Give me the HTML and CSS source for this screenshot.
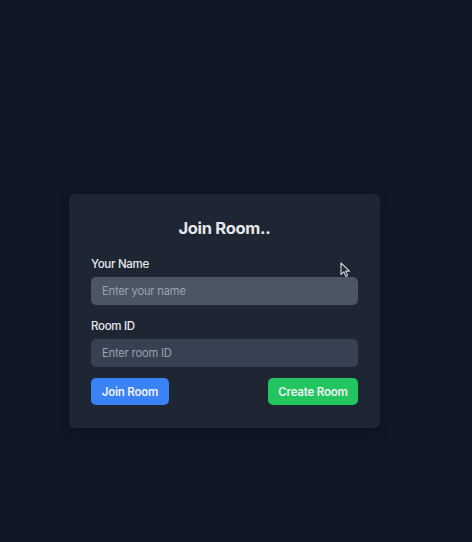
FILE: index.html
```html
<!DOCTYPE html>
<html>
<head>
<meta charset="utf-8">
<link rel="stylesheet" href="styles.css">
</head>
<body>
<div class="page">
  <div class="card">
    <h1 class="title">Join Room..</h1>
    <div class="field">
      <label class="label">Your Name</label>
      <input class="input input-hover" type="text" placeholder="Enter your name">
    </div>
    <div class="field">
      <label class="label">Room ID</label>
      <input class="input" type="text" placeholder="Enter room ID">
    </div>
    <div class="actions">
      <button class="btn btn-blue">Join Room</button>
      <button class="btn btn-green">Create Room</button>
    </div>
  </div>
</div>
<svg class="cursor" width="11" height="16" viewBox="0 0 11 16">
  <path d="M1 1 L1 12.5 L3.8 9.8 L5.8 14.4 L7.6 13.6 L5.7 9.1 L9.5 9.1 Z" fill="#1f2937" stroke="#d1d5db" stroke-width="1.1" stroke-linejoin="round"/>
</svg>
</body>
</html>
```
FILE: styles.css
```css
* { box-sizing: border-box; }
html, body { margin: 0; padding: 0; }
body {
  background: #101725;
  width: 472px;
  height: 542px;
  overflow: hidden;
  font-family: Inter, "Noto Sans", sans-serif;
  position: relative;
}
.page {
  padding: 194px 0 0 69px;
}
.card {
  width: 311px;
  height: 234px;
  background: #1e2633;
  border-radius: 6px;
  padding: 22px 22px 0 22px;
  box-shadow: 0 4px 12px rgba(0,0,0,0.25);
}
.title {
  margin: 0 0 17px 0;
  text-align: center;
  font-size: 16.5px;
  font-weight: 700;
  letter-spacing: -0.3px;
  color: #e5e7eb;
  line-height: 24px;
}
.field {
  display: flex;
  flex-direction: column;
  gap: 5px;
  margin-bottom: 14px;
}
.label {
  font-size: 11.5px;
  font-weight: 500;
  letter-spacing: -0.3px;
  color: #e8eaee;
  line-height: 15px;
}
.input {
  width: 267px;
  height: 28px;
  border: none;
  outline: none;
  border-radius: 5px;
  background: #374151;
  padding: 0 11px;
  font-family: inherit;
  font-size: 11.2px;
  letter-spacing: -0.2px;
  color: #e5e7eb;
}
.input-hover { background: #4b5563; }
.input::placeholder { color: #9ca3af; }
.actions {
  display: flex;
  justify-content: space-between;
  width: 267px;
  margin-top: -3px;
}
.btn {
  height: 27px;
  border: none;
  border-radius: 5px;
  padding: 0;
  white-space: nowrap;
  text-align: center;
  font-family: inherit;
  font-size: 11.5px;
  font-weight: 600;
  letter-spacing: -0.2px;
  color: #eef2f7;
}
.btn-blue { background: #3b82f6; width: 78px; }
.btn-green { background: #22c55e; width: 90px; }
.cursor {
  position: absolute;
  left: 340px;
  top: 262px;
}
```
